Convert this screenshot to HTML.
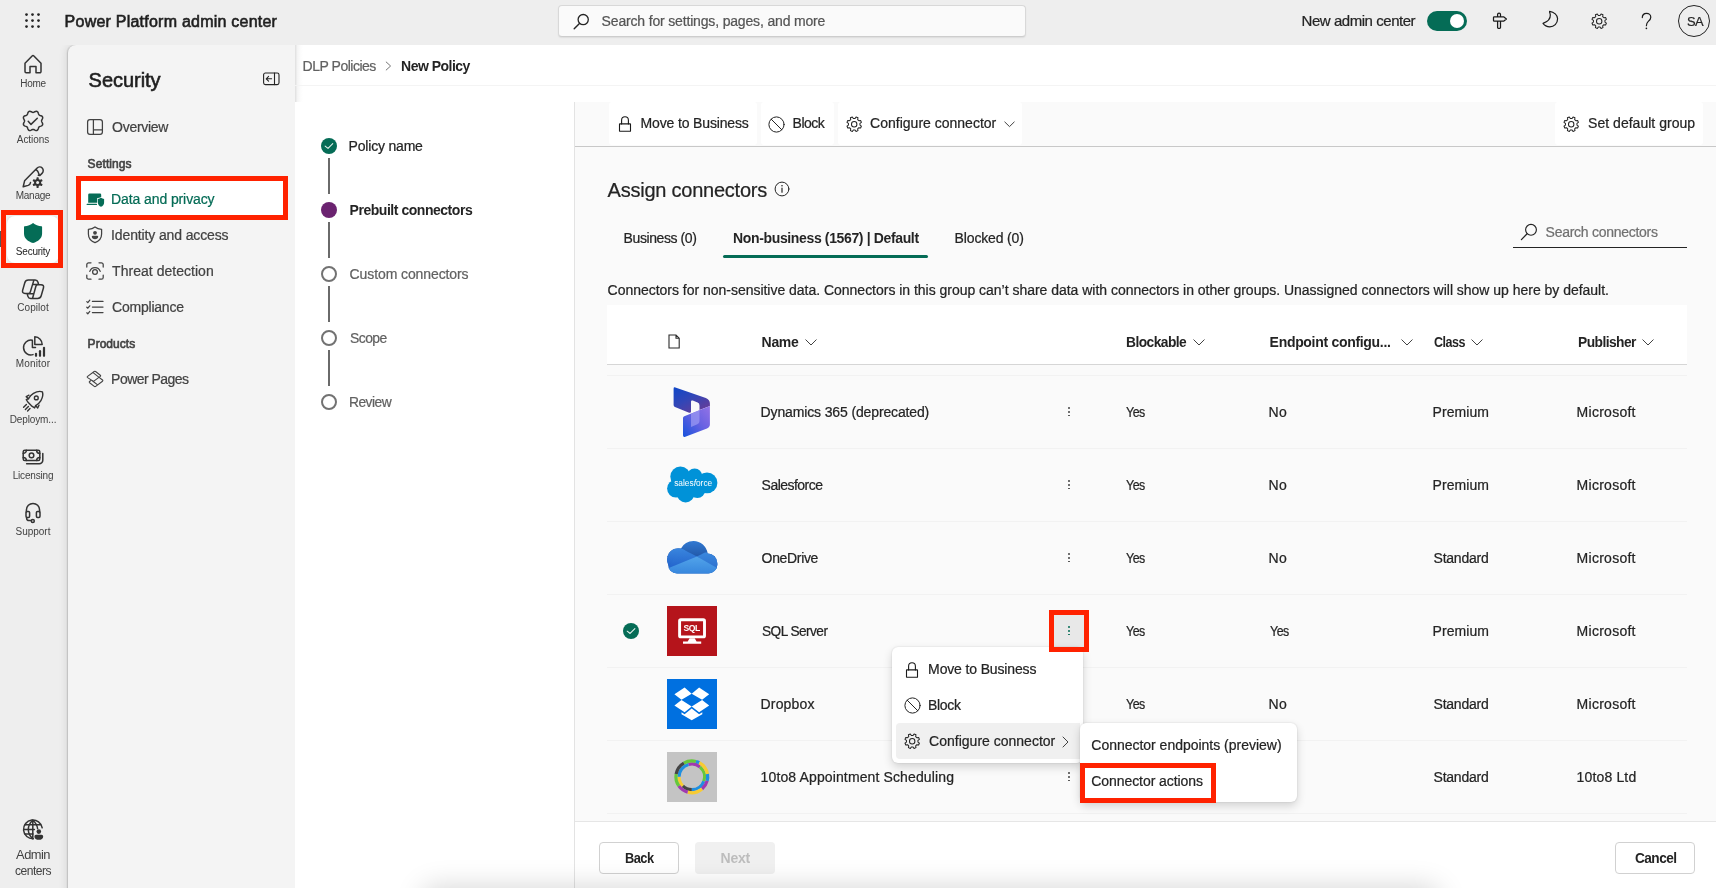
<!DOCTYPE html>
<html><head><meta charset="utf-8">
<style>
*{box-sizing:border-box;margin:0;padding:0}
html,body{width:1716px;height:888px;overflow:hidden}
body{background:#eeeeee;font-family:"Liberation Sans",sans-serif;font-size:14px;color:#242424;position:relative}
.abs{position:absolute}
.t{-webkit-text-stroke:.22px currentColor;position:absolute;white-space:nowrap;line-height:20px;height:20px;transform:translateY(calc(-50% + .3px)) scaleX(var(--sx,1));transform-origin:0 50%}
.sb{-webkit-text-stroke:0.6px currentColor}
svg{position:absolute;overflow:visible}
.ic{fill:none;stroke:#242424;stroke-width:1;stroke-linecap:round;stroke-linejoin:round}
.red{position:absolute;border:4px solid #ff2200}
#root{position:absolute;left:0;top:0;width:1716px;height:888px;will-change:transform}
</style></head><body><div id="root">
<div class="abs" style="left:0;top:0;width:1716px;height:45px;background:#eeeeee"></div>
<svg style="left:24px;top:12px" width="17" height="17" viewBox="0 0 17 17"><g fill="#242424"><circle cx="2.5" cy="2.6" r="1.35"/><circle cx="8.5" cy="2.6" r="1.35"/><circle cx="14.5" cy="2.6" r="1.35"/><circle cx="2.5" cy="8.6" r="1.35"/><circle cx="8.5" cy="8.6" r="1.35"/><circle cx="14.5" cy="8.6" r="1.35"/><circle cx="2.5" cy="14.6" r="1.35"/><circle cx="8.5" cy="14.6" r="1.35"/><circle cx="14.5" cy="14.6" r="1.35"/></g></svg>
<span class="t sb" style="letter-spacing:0.232px;margin-left:-0.40px;left:65px;top:21.900px;font-size:16px;color:#1f1f1f">Power Platform admin center</span>
<div class="abs" style="left:557.500px;top:4.500px;width:468.500px;height:32px;background:#fafafa;border:1px solid #d8d8d8;border-bottom-color:#cdcdcd;border-radius:4px;box-shadow:0 1px 1.500px rgba(0,0,0,.08)"></div>
<svg style="left:573px;top:13px" width="17" height="17" viewBox="0 0 17 17"><circle class="ic" cx="10.2" cy="6.6" r="5.1" style="stroke-width:1.3"/><path class="ic" d="M6.5 10.4 L1.2 15.8" style="stroke-width:1.4"/></svg>
<span class="t" style="letter-spacing:-0.165px;margin-left:0.60px;left:601px;top:21px;font-size:14px;color:#555">Search for settings, pages, and more</span>
<span class="t" style="letter-spacing:-0.459px;margin-left:-0.40px;left:1302px;top:21px;font-size:15px;color:#242424">New admin center</span>
<div class="abs" style="left:1427px;top:11px;width:40px;height:20px;border-radius:10px;background:#056c56"></div>
<div class="abs" style="left:1450px;top:14px;width:14px;height:14px;border-radius:7px;background:#fff"></div>
<!-- signpost -->
<svg style="left:1489px;top:11px" width="20" height="20" viewBox="0 0 20 20"><path class="ic" d="M8.600 5.800 V3.600 a1.450 1.450 0 0 1 2.900 0 V5.800 M5.300 5.800 H14.600 L17.400 8 L14.600 10.200 H5.300 a.8 .8 0 0 1 -.8 -.8 V6.600 a.8 .8 0 0 1 .8 -.8 Z M8.600 10.200 V16.600 a.8 .8 0 0 0 .8 .8 H10.700 a.8 .8 0 0 0 .8 -.8 V10.200" style="stroke-width:1.250;stroke:#1a1a1a"/></svg>
<!-- moon -->
<svg style="left:1540px;top:8px" width="20" height="20" viewBox="0 0 20 20"><path class="ic" d="M9.600 3.300 C14 4 17.600 7 17.600 10.800 C17.600 15.500 14 18.800 9.800 18.800 C7 18.800 4.500 17.500 3 15.400 C7.500 13.800 10.500 10.500 10.300 7 C10.200 5.500 9.400 4.400 9.600 3.300 Z" style="stroke-width:1.200;stroke:#1a1a1a"/></svg>
<!-- gear -->
<svg style="left:1590.700px;top:12.650px" width="16.400" height="16.400" viewBox="0 0 20 20"><g class="mi" style="stroke-width:1.250"><circle cx="10" cy="10" r="3.300"/><path d="M11.05 2.98 L12.28 1.19 L14.62 2.16 L14.22 4.29 L15.71 5.78 L17.84 5.38 L18.81 7.72 L17.02 8.95 L17.02 11.05 L18.81 12.28 L17.84 14.62 L15.71 14.22 L14.22 15.71 L14.62 17.84 L12.28 18.81 L11.05 17.02 L8.95 17.02 L7.72 18.81 L5.38 17.84 L5.78 15.71 L4.29 14.22 L2.16 14.62 L1.19 12.28 L2.98 11.05 L2.98 8.95 L1.19 7.72 L2.16 5.38 L4.29 5.78 L5.78 4.29 L5.38 2.16 L7.72 1.19 L8.95 2.98 Z"/></g></svg>
<svg style="left:1640px;top:11px" width="13" height="20" viewBox="0 0 13 20"><path class="ic" d="M2.300 6.600 C2.300 4.200 4 2.400 6.500 2.400 C9 2.400 10.800 4.100 10.800 6.300 C10.800 8.300 9.600 9.300 8.300 10.400 C7.100 11.500 6.400 12.300 6.400 14.700" style="stroke-width:1.200;stroke:#1a1a1a"/><circle cx="6.400" cy="17.300" r=".85" fill="#1a1a1a"/></svg>
<div class="abs" style="left:1678px;top:5px;width:32px;height:32px;border-radius:16px;border:1px solid #242424"></div>
<span class="t" style="letter-spacing:-0.550px;margin-left:0.60px;--sx:0.9929;left:1686px;top:22px;font-size:13px;color:#242424">SA</span>

<style>
.rl{position:absolute;white-space:nowrap;font-size:10px;line-height:14px;height:14px;color:#424242;transform:translate(-50%,-50%) scaleX(var(--sx,1));left:33px}
.ri{fill:none;stroke:#333;stroke-width:1.5;stroke-linecap:round;stroke-linejoin:round}
</style>
<!-- selected bg -->
<div class="abs" style="left:6.500px;top:215.700px;width:52px;height:47.500px;border-radius:8px;background:#fff;box-shadow:0 0 2px rgba(0,0,0,.10)"></div>
<div class="abs" style="left:0;top:231px;width:1.500px;height:16px;background:#555"></div>
<!-- home -->
<svg style="left:23px;top:54px" width="20" height="20" viewBox="0 0 20 20"><path class="ri" d="M2 9.2 V17.6 a1.2 1.2 0 0 0 1.2 1.2 H7 V12.6 H13 V18.8 H16.8 a1.2 1.2 0 0 0 1.2 -1.2 V9.2 L10.9 2 a1.3 1.3 0 0 0 -1.8 0 Z"/></svg>
<span class="rl" style="letter-spacing:-0.271px;margin-left:0.00px;top:84px">Home</span>
<!-- actions -->
<svg style="left:22px;top:110px" width="22" height="22" viewBox="0 0 22 22"><path class="ri" d="M11.05 2.40 L11.61 2.30 L12.22 2.03 L12.88 1.68 L13.60 1.39 L14.32 1.26 L14.99 1.38 L15.55 1.77 L15.98 2.37 L16.27 3.08 L16.50 3.80 L16.73 4.42 L17.06 4.89 L17.53 5.22 L18.15 5.45 L18.87 5.68 L19.58 5.97 L20.18 6.40 L20.57 6.96 L20.69 7.63 L20.56 8.35 L20.27 9.07 L19.92 9.73 L19.65 10.34 L19.55 10.90 L19.65 11.46 L19.92 12.07 L20.27 12.73 L20.56 13.45 L20.69 14.17 L20.57 14.84 L20.18 15.40 L19.58 15.82 L18.87 16.12 L18.15 16.35 L17.53 16.58 L17.06 16.91 L16.73 17.38 L16.50 18.00 L16.27 18.72 L15.98 19.43 L15.55 20.03 L14.99 20.42 L14.32 20.54 L13.60 20.41 L12.88 20.12 L12.22 19.77 L11.61 19.50 L11.05 19.40 L10.49 19.50 L9.88 19.77 L9.22 20.12 L8.50 20.41 L7.78 20.54 L7.11 20.42 L6.55 20.03 L6.13 19.43 L5.83 18.72 L5.60 18.00 L5.37 17.38 L5.04 16.91 L4.57 16.58 L3.95 16.35 L3.23 16.12 L2.52 15.83 L1.92 15.40 L1.53 14.84 L1.41 14.17 L1.54 13.45 L1.83 12.73 L2.18 12.07 L2.45 11.46 L2.55 10.90 L2.45 10.34 L2.18 9.73 L1.83 9.07 L1.54 8.35 L1.41 7.63 L1.53 6.96 L1.92 6.40 L2.52 5.97 L3.23 5.68 L3.95 5.45 L4.57 5.22 L5.04 4.89 L5.37 4.42 L5.60 3.80 L5.83 3.08 L6.12 2.37 L6.55 1.77 L7.11 1.38 L7.78 1.26 L8.50 1.39 L9.22 1.68 L9.88 2.03 L10.49 2.30 Z M6.200 11.300 L9 14.400 L15.300 8.200"/></svg>
<span class="rl" style="letter-spacing:-0.049px;margin-left:0.00px;top:140px">Actions</span>
<!-- manage -->
<svg style="left:22px;top:166px" width="23" height="23" viewBox="0 0 23 23"><path class="ri" d="M1.200 20.700 L2.600 14.800 L14.900 2.300 C16.400 .8 18.800 .6 20.200 2 C21.700 3.500 21.500 5.900 20 7.400 L17.900 9.500 L16.300 9.300 M14 3.300 C15.500 4.500 16.800 6.300 17.300 8.800 M1.200 20.700 L6.100 19.400 C7.300 19 8.300 17.900 8.500 16.600"/><g fill="#333"><circle cx="15.600" cy="16.600" r="3.500"/><rect x="14.500" y="11.300" width="2.200" height="10.600" rx=".6"/><rect x="14.500" y="11.300" width="2.200" height="10.600" rx=".6" transform="rotate(60 15.600 16.600)"/><rect x="14.500" y="11.300" width="2.200" height="10.600" rx=".6" transform="rotate(120 15.600 16.600)"/></g><circle cx="15.600" cy="16.600" r="1.500" fill="#eee"/></svg>
<span class="rl" style="letter-spacing:-0.295px;margin-left:0.00px;top:196px">Manage</span>
<!-- security -->
<svg style="left:23.900px;top:223px" width="18.100" height="20.100" viewBox="0 0 18.100 20.100"><path d="M9.050 0 C7 2 3.500 3.200 .6 3.300 Q0 3.300 0 3.900 V10.500 C0 15.500 4 18.500 9.050 20.100 C14.100 18.500 18.100 15.500 18.100 10.500 V3.900 Q18.100 3.300 17.500 3.300 C14.600 3.200 11.100 2 9.050 0 Z" fill="#046c56"/></svg>
<span class="rl" style="letter-spacing:-0.232px;margin-left:0.00px;top:252px;color:#242424">Security</span>
<!-- copilot -->
<svg style="left:21px;top:279px" width="24" height="21" viewBox="0 0 24 21"><path class="ri" d="M7.400 1.100 H12.900 L9.300 13 Q8.900 14.400 7.400 14.400 H4 Q1 14.400 1.600 11.400 L3.800 3.800 Q4.600 1.100 7.400 1.100 Z M16.800 5.800 H20 Q23.200 5.800 22.500 8.800 L20.200 16.800 Q19.400 19.500 16.600 19.500 H11.500 L14.900 7.200 Q15.300 5.800 16.800 5.800 M12.900 1.100 H14.200 Q16.400 1.100 17 3.200 L17.700 5.600 M11.700 5.600 H16.800 M6.100 14.600 L6.900 17.400 Q7.500 19.500 9.700 19.500 H11.500 M7.600 14.700 H12.400"/></svg>
<span class="rl" style="letter-spacing:0.058px;margin-left:0.00px;top:308px">Copilot</span>
<!-- monitor -->
<svg style="left:24px;top:335px" width="22" height="23" viewBox="0 0 22 23"><g class="ri"><path d="M8.200 5.200 A7.400 7.400 0 1 0 9 19.600"/><path d="M10.800 1.800 V9.600 H18.200 A7.600 7.600 0 0 0 10.800 1.800 Z"/><path d="M8.400 5.400 V12.400 H11.500"/></g><g stroke="#333" stroke-width="2.200" stroke-linecap="round"><path d="M12 20.800 V18.800"/><path d="M16 20.800 V16.200"/><path d="M20 20.800 V12.800"/></g></svg>
<span class="rl" style="letter-spacing:0.181px;margin-left:0.00px;top:364px">Monitor</span>
<!-- deployment -->
<svg style="left:22px;top:390px" width="22" height="22" viewBox="0 0 22 22"><g class="ri" style="stroke-width:1.400"><path d="M11.500 3.300 C14.500 1.600 18.500 1.200 20.400 1.800 C21 3.700 20.600 7.700 18.900 10.700 C17.600 13 15.500 14.600 13.700 15.600 L12.600 17.900 L10.200 16.400 L5.800 12 L4.300 9.600 L6.600 8.500 C7.600 6.700 9.200 4.600 11.500 3.300 Z"/><circle cx="14.300" cy="7.900" r="1.900"/><path d="M6.600 8.700 L4.200 6.600 L7 5.200 M13.600 15.600 L15.700 18 L17 15.200"/><path d="M1.600 17.200 L4.400 14.400 M3.400 19.400 L6.400 16.400 M5.600 21 L8 18.600"/></g></svg>
<span class="rl" style="letter-spacing:-0.113px;margin-left:0.00px;top:420px">Deploym...</span>
<!-- licensing -->
<svg style="left:22px;top:449px" width="23" height="18" viewBox="0 0 23 18"><g class="ri"><rect x="1.200" y="1.200" width="16.600" height="10.400" rx="1.600"/><circle cx="9.500" cy="6.400" r="2.300"/><path d="M1.200 4.400 a3.200 3.200 0 0 0 3.200 -3.200 M17.800 4.400 a3.200 3.200 0 0 1 -3.200 -3.200 M1.200 8.400 a3.200 3.200 0 0 1 3.200 3.200 M17.800 8.400 a3.200 3.200 0 0 0 -3.200 3.200"/><path d="M20.800 4.600 V11.200 a3.600 3.600 0 0 1 -3.600 3.600 H4.600"/></g></svg>
<span class="rl" style="letter-spacing:-0.186px;margin-left:0.00px;top:476px">Licensing</span>
<!-- support -->
<svg style="left:24px;top:502px" width="18" height="22" viewBox="0 0 18 22"><g class="ri"><path d="M2.400 10 V8 a6.600 6.600 0 0 1 13.200 0 V10"/><rect x="2" y="9.400" width="3.600" height="6" rx="1.200"/><rect x="12.400" y="9.400" width="3.600" height="6" rx="1.200"/><path d="M2.600 15.400 V16 a2.600 2.600 0 0 0 2.600 2.600 H7.400"/><circle cx="8.800" cy="18.900" r="1.500"/></g></svg>
<span class="rl" style="letter-spacing:-0.024px;margin-left:0.00px;top:532px">Support</span>
<!-- admin centers -->
<svg style="left:22px;top:819px" width="23" height="23" viewBox="0 0 23 23"><g class="ri"><path d="M11.400 19.800 A9.400 9.400 0 1 1 20.200 8.800"/><path d="M1.800 10.400 H12.400 M3 5.800 H18.400 M3 15 H11"/><path d="M10.800 1.200 C4.800 6.400 4.800 14.600 10.800 19.600 M10.800 1.200 C13.800 3.800 15.200 6.400 15.600 9.600 M10.800 1.200 V19.600"/></g><circle cx="16.800" cy="12.600" r="2.300" fill="#333"/><path d="M12.400 17.400 a1.600 1.600 0 0 1 1.600 -1.600 H19.600 a1.600 1.600 0 0 1 1.600 1.600 c0 2.200 -1.900 3.400 -4.400 3.400 s-4.400 -1.200 -4.400 -3.400 z" fill="#333"/></svg>
<span class="rl" style="letter-spacing:-0.550px;margin-left:0.00px;--sx:0.9908;top:855px;font-size:13px;line-height:16px;height:16px">Admin</span>
<span class="rl" style="letter-spacing:-0.550px;margin-left:0.00px;--sx:0.9289;top:871px;font-size:13px;line-height:16px;height:16px">centers</span>
<div class="red" style="left:1.200px;top:210.400px;width:62.100px;height:58px;border-width:5.300px"></div>

<style>
.ni{fill:none;stroke:#424242;stroke-width:1.250;stroke-linecap:round;stroke-linejoin:round}
.nt{color:#424242;font-size:14px;left:111.500px}
.nh{color:#424242;font-size:12px;left:87px}
</style>
<div class="abs" style="left:50px;top:45px;width:245px;height:843px;overflow:hidden"><div class="abs" style="left:18px;top:0;width:240px;height:860px;background:#f4f4f4;border-radius:8px 0 0 0;box-shadow:-.5px 0 1.500px rgba(0,0,0,.17), -3px 0 7px rgba(0,0,0,.07)"></div></div>
<span class="t sb" style="letter-spacing:-0.035px;margin-left:0.60px;left:88px;top:79.500px;font-size:20px;line-height:28px;height:28px;color:#1f1f1f">Security</span>
<!-- collapse icon -->
<svg style="left:263px;top:72px" width="17" height="14" viewBox="0 0 17 14"><rect class="ni" x=".6" y="1" width="15.400" height="11.600" rx="1.800" style="stroke:#242424;stroke-width:1.100"/><path class="ni" d="M11.500 1 V12.600 M8.600 6.800 H3.400 M5.600 4.400 L3.200 6.800 L5.600 9.200" style="stroke:#242424;stroke-width:1.100"/></svg>
<!-- overview -->
<svg style="left:87px;top:119px" width="16" height="16" viewBox="0 0 16 16"><rect class="ni" x=".6" y=".6" width="14.800" height="14.800" rx="2.400"/><path class="ni" d="M6.400 .6 V15.400 M6.400 10.800 H15.400"/></svg>
<span class="t nt" style="letter-spacing:-0.291px;margin-left:0.60px;top:127px">Overview</span>
<span class="t nh sb" style="letter-spacing:0.092px;margin-left:0.60px;top:163.500px">Settings</span>
<!-- selected -->
<div class="abs" style="left:80px;top:181px;width:206px;height:36px;border-radius:4px;background:#fff"></div>
<svg style="left:86px;top:193px" width="19" height="15" viewBox="0 0 19 15"><g fill="#056c56"><path d="M2.200 1.800 a1.200 1.200 0 0 1 1.200 -1.200 H14 a1.200 1.200 0 0 1 1.200 1.200 V4 c-1.400 .8 -2.800 1 -4 1.100 V9.800 H2.200 Z"/><rect x=".6" y="10.800" width="10.400" height="1.100" rx=".5"/><path d="M15 4.800 c1 .8 2 1.100 3.100 1.200 V9.400 c0 2.300 -1.400 3.600 -3.100 4.300 c-1.700 -.7 -3.100 -2 -3.100 -4.300 V6 c1.100 -.1 2.100 -.4 3.100 -1.200 z"/></g></svg>
<span class="t nt" style="letter-spacing:-0.104px;margin-left:-0.40px;top:199px;color:#056c56">Data and privacy</span>
<!-- identity -->
<svg style="left:87px;top:226px" width="16" height="18" viewBox="0 0 16 18"><path class="ni" d="M8 1 C6 2.600 3.800 3.200 1.400 3.300 V8 C1.400 12.400 4.200 15.200 8 16.600 C11.800 15.200 14.600 12.400 14.600 8 V3.300 C12.200 3.200 10 2.600 8 1 Z"/><circle cx="8" cy="6.800" r="1.900" fill="#424242"/><path d="M4.800 10.800 a1 1 0 0 1 1 -1 H10.200 a1 1 0 0 1 1 1 c0 1.500 -1.400 2.400 -3.200 2.400 s-3.200 -.9 -3.200 -2.400 z" fill="#424242"/></svg>
<span class="t nt" style="letter-spacing:-0.130px;margin-left:-0.40px;top:235px">Identity and access</span>
<!-- threat -->
<svg style="left:86px;top:262px" width="18" height="18" viewBox="0 0 18 18"><path class="ni" d="M.8 5 V2.600 A1.800 1.800 0 0 1 2.600 .8 H5 M13 .8 H15.400 A1.800 1.800 0 0 1 17.200 2.600 V5 M17.200 13 V15.400 A1.800 1.800 0 0 1 15.400 17.200 H13 M5 17.200 H2.600 A1.800 1.800 0 0 1 .8 15.400 V13"/><circle class="ni" cx="9" cy="10" r="2.400"/><path class="ni" d="M3.800 9.400 C4.600 6.800 6.600 5.600 9 5.600 C11.400 5.600 13.400 6.800 14.200 9.400"/></svg>
<span class="t nt" style="letter-spacing:0.028px;margin-left:0.60px;top:271px">Threat detection</span>
<!-- compliance -->
<svg style="left:86px;top:299px" width="18" height="16" viewBox="0 0 18 16"><path class="ni" d="M6.400 2.400 H17 M6.400 8 H17 M6.400 13.600 H17 M.8 2.600 L1.800 3.600 L3.800 1.200 M.8 8.200 L1.800 9.200 L3.800 6.800 M.8 13.800 L1.800 14.800 L3.800 12.400"/></svg>
<span class="t nt" style="letter-spacing:-0.226px;margin-left:0.60px;top:307px">Compliance</span>
<span class="t nh sb" style="letter-spacing:0.035px;margin-left:0.60px;top:343.500px">Products</span>
<!-- power pages -->
<svg style="left:86px;top:370px" width="18" height="18" viewBox="0 0 18 18"><path class="ni" style="stroke-width:1.100" d="M1.600 7.600 Q.8 7 1.600 6.400 L8.200 1.500 Q8.900 1 9.600 1.500 L14.300 5.200 Q15 5.800 14.300 6.400 L7.500 11.400 Z M7.400 2.900 L13.100 7.400 M13.100 7.400 L16.500 10 Q17.200 10.600 16.500 11.200 L9.700 16.400 Q9 16.900 8.300 16.400 L3.600 12.700 Q2.900 12.100 3.600 11.500 L4.800 10.500 M6.300 10.700 L11.300 14.600"/></svg>
<span class="t nt" style="letter-spacing:-0.547px;margin-left:-0.40px;top:379px">Power Pages</span>
<div class="red" style="left:76.100px;top:176.400px;width:212.300px;height:43.200px;border-width:5px"></div>

<style>
.mi{fill:none;stroke:#242424;stroke-width:1;stroke-linecap:round;stroke-linejoin:round}
.cell{font-size:14px;color:#242424}
.th{font-size:14px;color:#242424;font-weight:bold;-webkit-text-stroke:0}
.sep{position:absolute;left:607px;width:1080px;height:1px;background:#f2f2f2}
.dots{position:absolute;left:1068px;width:2px}
.dots i{position:absolute;left:0;width:1.500px;height:1.500px;border-radius:1px;background:#4a4a4a}
</style>
<!-- white content -->
<div class="abs" style="left:295px;top:45px;width:1421px;height:843px;background:#fff"></div>
<div class="abs" style="left:295px;top:45px;width:8px;height:57px;background:linear-gradient(90deg,rgba(0,0,0,.13),rgba(0,0,0,.045) 30%,rgba(0,0,0,.01) 70%,rgba(0,0,0,0))"></div>
<div class="abs" style="left:295px;top:85px;width:1421px;height:1px;background:#f4f4f4"></div>
<!-- breadcrumb -->
<span class="t" style="letter-spacing:-0.488px;margin-left:-0.40px;left:303px;top:66px;color:#616161">DLP Policies</span>
<svg style="left:385px;top:61px" width="7" height="10" viewBox="0 0 7 10"><path class="mi" d="M1.200 1 L5.600 5 L1.200 9" style="stroke:#757575"/></svg>
<span class="t" style="letter-spacing:-0.515px;margin-left:0.60px;left:400.500px;top:66px;font-weight:bold;-webkit-text-stroke:0;color:#242424">New Policy</span>
<!-- steps -->
<div class="abs" style="left:328px;top:158px;width:1.600px;height:36px;background:#6a6a6a"></div>
<div class="abs" style="left:328px;top:222px;width:1.600px;height:36px;background:#6a6a6a"></div>
<div class="abs" style="left:328px;top:286px;width:1.600px;height:36px;background:#6a6a6a"></div>
<div class="abs" style="left:328px;top:350px;width:1.600px;height:36px;background:#6a6a6a"></div>
<div class="abs" style="left:320.800px;top:138px;width:16px;height:16px;border-radius:8px;background:#056c56"></div>
<svg style="left:320.800px;top:138px" width="16" height="16" viewBox="0 0 16.200 16.200"><path d="M4.200 8.200 L7.100 10.500 L11.900 5.600" fill="none" stroke="#e8f3ef" stroke-width="1.050" stroke-linecap="round" stroke-linejoin="round"/></svg>
<div class="abs" style="left:320.800px;top:202px;width:16px;height:16px;border-radius:8px;background:#6b2370"></div>
<div class="abs" style="left:320.800px;top:266px;width:16px;height:16px;border-radius:8px;border:2px solid #727272;background:#fff"></div>
<div class="abs" style="left:320.800px;top:330px;width:16px;height:16px;border-radius:8px;border:2px solid #727272;background:#fff"></div>
<div class="abs" style="left:320.800px;top:394px;width:16px;height:16px;border-radius:8px;border:2px solid #727272;background:#fff"></div>
<span class="t" style="letter-spacing:-0.197px;margin-left:-0.40px;left:349px;top:146px;color:#242424">Policy name</span>
<span class="t" style="letter-spacing:-0.466px;margin-left:0.60px;left:349px;top:210px;color:#242424;font-weight:bold;-webkit-text-stroke:0">Prebuilt connectors</span>
<span class="t" style="letter-spacing:-0.100px;margin-left:0.60px;left:349px;top:274px;color:#616161">Custom connectors</span>
<span class="t" style="letter-spacing:-0.550px;margin-left:0.60px;--sx:0.9944;left:349px;top:338px;color:#616161">Scope</span>
<span class="t" style="letter-spacing:-0.550px;margin-left:-0.39px;--sx:0.9874;left:349px;top:402px;color:#616161">Review</span>
<!-- right panel -->
<div class="abs" style="left:574px;top:102px;width:1142px;height:720px;background:#fafafa;border-left:1px solid #e3e3e3"></div>
<div class="abs" style="left:575px;top:146px;width:1141px;height:1px;background:#c8c8c8"></div>
<!-- toolbar buttons -->
<div class="abs" style="left:609px;top:102px;width:148px;height:43.300px;background:#fff;border-radius:3px"></div>
<div class="abs" style="left:761px;top:102px;width:73px;height:43.300px;background:#fff;border-radius:3px"></div>
<div class="abs" style="left:838px;top:102px;width:184px;height:43.300px;background:#fff;border-radius:3px"></div>
<div class="abs" style="left:1555px;top:102px;width:148px;height:43.300px;background:#fff;border-radius:3px"></div>
<svg id="lock1" style="left:618px;top:115px" width="14" height="18" viewBox="0 0 14 18"><rect class="mi" x="1.500" y="8.900" width="11" height="7.400" rx=".3" style="stroke-width:1.100;stroke:#1a1a1a"/><path class="mi" d="M3.600 8.900 V5.200 a3.400 3.400 0 0 1 6.800 0 V8.900" style="stroke-width:1.100;stroke:#1a1a1a"/></svg>
<span class="t" style="letter-spacing:-0.153px;margin-left:-0.40px;left:641px;top:123px">Move to Business</span>
<svg style="left:768px;top:115.500px" width="17" height="17" viewBox="0 0 17 17"><circle class="mi" cx="8.500" cy="8.500" r="7.600"/><path class="mi" d="M3.200 3.200 L13.800 13.800"/></svg>
<span class="t" style="letter-spacing:-0.509px;margin-left:-0.40px;left:793px;top:123px">Block</span>
<svg class="gear" style="left:845.650px;top:115.650px" width="16.400" height="16.400" viewBox="0 0 20 20"><g class="mi" style="stroke-width:1.250"><circle cx="10" cy="10" r="3.300"/><path d="M11.05 2.98 L12.28 1.19 L14.62 2.16 L14.22 4.29 L15.71 5.78 L17.84 5.38 L18.81 7.72 L17.02 8.95 L17.02 11.05 L18.81 12.28 L17.84 14.62 L15.71 14.22 L14.22 15.71 L14.62 17.84 L12.28 18.81 L11.05 17.02 L8.95 17.02 L7.72 18.81 L5.38 17.84 L5.78 15.71 L4.29 14.22 L2.16 14.62 L1.19 12.28 L2.98 11.05 L2.98 8.95 L1.19 7.72 L2.16 5.38 L4.29 5.78 L5.78 4.29 L5.38 2.16 L7.72 1.19 L8.95 2.98 Z"/></g></svg>
<span class="t" style="letter-spacing:0.005px;margin-left:0.60px;left:869.500px;top:123px">Configure connector</span>
<svg style="left:1004px;top:120.500px" width="11" height="7" viewBox="0 0 11 7"><path class="mi" d="M.8 1 L5.500 5.600 L10.200 1" style="stroke:#424242"/></svg>
<svg class="gear" style="left:1563.250px;top:115.800px" width="16.400" height="16.400" viewBox="0 0 20 20"><g class="mi" style="stroke-width:1.250"><circle cx="10" cy="10" r="3.300"/><path d="M11.05 2.98 L12.28 1.19 L14.62 2.16 L14.22 4.29 L15.71 5.78 L17.84 5.38 L18.81 7.72 L17.02 8.95 L17.02 11.05 L18.81 12.28 L17.84 14.62 L15.71 14.22 L14.22 15.71 L14.62 17.84 L12.28 18.81 L11.05 17.02 L8.95 17.02 L7.72 18.81 L5.38 17.84 L5.78 15.71 L4.29 14.22 L2.16 14.62 L1.19 12.28 L2.98 11.05 L2.98 8.95 L1.19 7.72 L2.16 5.38 L4.29 5.78 L5.78 4.29 L5.38 2.16 L7.72 1.19 L8.95 2.98 Z"/></g></svg>
<span class="t" style="letter-spacing:0.022px;margin-left:0.60px;left:1587.500px;top:123px">Set default group</span>
<!-- heading -->
<span class="t" style="letter-spacing:-0.239px;margin-left:0.60px;left:607px;top:190px;font-size:20px;line-height:28px;height:28px">Assign connectors</span>
<svg style="left:773.600px;top:181.200px" width="16" height="16" viewBox="0 0 16 16"><circle class="mi" cx="8" cy="8" r="6.900"/><path class="mi" d="M8 7 V11.200" style="stroke-width:1.200"/><circle cx="8" cy="4.800" r=".8" fill="#242424"/></svg>
<!-- tabs -->
<span class="t" style="letter-spacing:-0.413px;margin-left:-0.40px;left:624px;top:238px">Business (0)</span>
<span class="t" style="letter-spacing:-0.361px;margin-left:0.60px;left:732.500px;top:238px;font-weight:bold;-webkit-text-stroke:0">Non-business (1567) | Default</span>
<div class="abs" style="left:723px;top:254.700px;width:205px;height:3.300px;border-radius:2px;background:#056c56"></div>
<span class="t" style="letter-spacing:-0.154px;margin-left:-0.40px;left:955px;top:238px">Blocked (0)</span>
<!-- search connectors -->
<svg style="left:1520px;top:223px" width="18" height="18" viewBox="0 0 18 18"><circle class="mi" cx="11" cy="6.800" r="5.400" style="stroke:#242424;stroke-width:1.150"/><path class="mi" d="M7.100 10.800 L1.400 16.600" style="stroke:#242424;stroke-width:1.300"/></svg>
<span class="t" style="letter-spacing:-0.277px;margin-left:0.60px;left:1545px;top:232px;color:#707070">Search connectors</span>
<div class="abs" style="left:1513px;top:246.700px;width:174px;height:1.200px;background:#242424"></div>
<!-- description -->
<span class="t" style="letter-spacing:-0.021px;margin-left:0.60px;left:607px;top:290px">Connectors for non-sensitive data. Connectors in this group can’t share data with connectors in other groups. Unassigned connectors will show up here by default.</span>
<!-- table header -->
<div class="abs" style="left:607px;top:305px;width:1080px;height:59px;background:#fff"></div>
<div class="abs" style="left:607px;top:363.800px;width:1080px;height:1.200px;background:#d6d6d6"></div>
<svg style="left:667.500px;top:334px" width="13" height="15" viewBox="0 0 13 15"><path class="mi" d="M1 1 H8 L11.200 4.200 V14 H1 Z M8 1 V4.200 H11.200" style="stroke:#2b2b2b;stroke-linejoin:miter;stroke-width:1.100"/></svg>
<span class="t th" style="letter-spacing:-0.315px;margin-left:0.60px;left:761px;top:342px">Name</span>
<svg style="left:805px;top:338.500px" width="12" height="7" viewBox="0 0 12 7"><path class="mi" d="M.8 .8 L6 6 L11.200 .8" style="stroke:#424242"/></svg>
<span class="t th" style="letter-spacing:-0.550px;margin-left:0.60px;--sx:0.9846;left:1125px;top:342px">Blockable</span>
<svg style="left:1193px;top:338.500px" width="12" height="7" viewBox="0 0 12 7"><path class="mi" d="M.8 .8 L6 6 L11.200 .8" style="stroke:#424242"/></svg>
<span class="t th" style="letter-spacing:-0.303px;margin-left:0.60px;left:1269px;top:342px">Endpoint configu...</span>
<svg style="left:1401px;top:338.500px" width="12" height="7" viewBox="0 0 12 7"><path class="mi" d="M.8 .8 L6 6 L11.200 .8" style="stroke:#424242"/></svg>
<span class="t th" style="letter-spacing:-0.550px;margin-left:0.60px;--sx:0.8934;left:1433px;top:342px">Class</span>
<svg style="left:1471px;top:338.500px" width="12" height="7" viewBox="0 0 12 7"><path class="mi" d="M.8 .8 L6 6 L11.200 .8" style="stroke:#424242"/></svg>
<span class="t th" style="letter-spacing:-0.550px;margin-left:0.60px;--sx:0.9842;left:1577px;top:342px">Publisher</span>
<svg style="left:1642px;top:338.500px" width="12" height="7" viewBox="0 0 12 7"><path class="mi" d="M.8 .8 L6 6 L11.200 .8" style="stroke:#424242"/></svg>
<!-- separators -->
<div class="sep" style="top:375px"></div><div class="sep" style="top:448px"></div><div class="sep" style="top:521px"></div><div class="sep" style="top:594px"></div><div class="sep" style="top:667px"></div><div class="sep" style="top:740px"></div><div class="sep" style="top:813px"></div>
<span class="t cell" style="letter-spacing:-0.138px;margin-left:-0.40px;left:761px;top:412px">Dynamics 365 (deprecated)</span>
<span class="t cell" style="letter-spacing:-0.550px;margin-left:0.60px;--sx:0.8832;left:1125px;top:412px">Yes</span>
<span class="t cell" style="letter-spacing:0.390px;margin-left:-0.40px;left:1269px;top:412px">No</span>
<span class="t cell" style="letter-spacing:0.059px;margin-left:-0.40px;left:1433px;top:412px">Premium</span>
<span class="t cell" style="letter-spacing:0.263px;margin-left:-0.40px;left:1577px;top:412px">Microsoft</span>
<div class="dots" style="top:407.4px"><i style="top:0;background:#424242"></i><i style="top:3.800px;background:#424242"></i><i style="top:7.600px;background:#424242"></i></div>
<span class="t cell" style="letter-spacing:-0.529px;margin-left:0.60px;left:761px;top:485px">Salesforce</span>
<span class="t cell" style="letter-spacing:-0.550px;margin-left:0.60px;--sx:0.8832;left:1125px;top:485px">Yes</span>
<span class="t cell" style="letter-spacing:0.390px;margin-left:-0.40px;left:1269px;top:485px">No</span>
<span class="t cell" style="letter-spacing:0.059px;margin-left:-0.40px;left:1433px;top:485px">Premium</span>
<span class="t cell" style="letter-spacing:0.263px;margin-left:-0.40px;left:1577px;top:485px">Microsoft</span>
<div class="dots" style="top:480.4px"><i style="top:0;background:#424242"></i><i style="top:3.800px;background:#424242"></i><i style="top:7.600px;background:#424242"></i></div>
<span class="t cell" style="letter-spacing:-0.335px;margin-left:0.60px;left:761px;top:558px">OneDrive</span>
<span class="t cell" style="letter-spacing:-0.550px;margin-left:0.60px;--sx:0.8832;left:1125px;top:558px">Yes</span>
<span class="t cell" style="letter-spacing:0.390px;margin-left:-0.40px;left:1269px;top:558px">No</span>
<span class="t cell" style="letter-spacing:-0.248px;margin-left:0.60px;left:1433px;top:558px">Standard</span>
<span class="t cell" style="letter-spacing:0.263px;margin-left:-0.40px;left:1577px;top:558px">Microsoft</span>
<div class="dots" style="top:553.4px"><i style="top:0;background:#424242"></i><i style="top:3.800px;background:#424242"></i><i style="top:7.600px;background:#424242"></i></div>
<span class="t cell" style="letter-spacing:-0.550px;margin-left:0.60px;--sx:0.9748;left:761px;top:631px">SQL Server</span>
<span class="t cell" style="letter-spacing:-0.550px;margin-left:0.60px;--sx:0.8832;left:1125px;top:631px">Yes</span>
<span class="t cell" style="letter-spacing:-0.550px;margin-left:0.60px;--sx:0.8832;left:1269px;top:631px">Yes</span>
<span class="t cell" style="letter-spacing:0.059px;margin-left:-0.40px;left:1433px;top:631px">Premium</span>
<span class="t cell" style="letter-spacing:0.263px;margin-left:-0.40px;left:1577px;top:631px">Microsoft</span>
<div class="abs" style="left:1053px;top:614px;width:32px;height:34px;background:#e8e8e8;border-radius:3px"></div>
<div class="dots" style="top:626.4px"><i style="top:0;background:#056c56"></i><i style="top:3.800px;background:#056c56"></i><i style="top:7.600px;background:#056c56"></i></div>
<span class="t cell" style="letter-spacing:0.147px;margin-left:-0.40px;left:761px;top:704px">Dropbox</span>
<span class="t cell" style="letter-spacing:-0.550px;margin-left:0.60px;--sx:0.8832;left:1125px;top:704px">Yes</span>
<span class="t cell" style="letter-spacing:0.390px;margin-left:-0.40px;left:1269px;top:704px">No</span>
<span class="t cell" style="letter-spacing:-0.248px;margin-left:0.60px;left:1433px;top:704px">Standard</span>
<span class="t cell" style="letter-spacing:0.263px;margin-left:-0.40px;left:1577px;top:704px">Microsoft</span>
<div class="dots" style="top:699.4px"><i style="top:0;background:#424242"></i><i style="top:3.800px;background:#424242"></i><i style="top:7.600px;background:#424242"></i></div>
<span class="t cell" style="letter-spacing:0.126px;margin-left:-0.40px;left:761px;top:777px">10to8 Appointment Scheduling</span>
<span class="t cell" style="letter-spacing:-0.248px;margin-left:0.60px;left:1433px;top:777px">Standard</span>
<span class="t cell" style="letter-spacing:0.150px;margin-left:-0.40px;left:1577px;top:777px">10to8 Ltd</span>
<div class="dots" style="top:772.4px"><i style="top:0;background:#424242"></i><i style="top:3.800px;background:#424242"></i><i style="top:7.600px;background:#424242"></i></div>
<svg style="left:672.900px;top:386.800px" width="38" height="51" viewBox="0 0 38 51"><defs>
<linearGradient id="dg1" x1="0" y1="0" x2=".75" y2="1"><stop offset="0" stop-color="#0f47c8"/><stop offset=".5" stop-color="#3346b6"/><stop offset="1" stop-color="#673c98"/></linearGradient>
<linearGradient id="dg2" x1="1" y1="0" x2="0" y2="1"><stop offset="0" stop-color="#9473e6"/><stop offset=".45" stop-color="#6a62e2"/><stop offset="1" stop-color="#1753dc"/></linearGradient></defs>
<path d="M.6 1.800 Q.6 -.2 2.400 .5 L32.800 11 Q36.900 12.600 36.900 16.600 V18.900 L26.500 23 V18.400 Q26.500 16.300 24.600 15.500 L19.800 13.600 Q18 12.900 18 14.800 V24.400 Q18 26.300 16.100 25.700 L2 20.100 Q.6 19.500 .6 18 Z" fill="url(#dg1)"/>
<path d="M10 31 Q10 29.700 11.300 29.200 L36.900 18.900 V37.600 Q36.900 40.400 34 41.400 L12.300 49.800 Q10 50.600 10 48.200 Z" fill="url(#dg2)"/>
<path d="M18 26.700 L26.500 23.300 V34 Q26.500 36.200 24.400 37.200 L18 39.900 Z" fill="#9a98f2" fill-opacity=".75"/>
</svg>
<svg style="left:666.800px;top:467px" width="51" height="36" viewBox="0 0 51 36"><g fill="#0092d8">
<circle cx="13.400" cy="9.700" r="10.100"/><circle cx="27.600" cy="9.200" r="7.700"/><circle cx="40" cy="15.900" r="10.400"/><circle cx="9" cy="21.600" r="8.900"/><circle cx="18.600" cy="26.500" r="8.900"/><circle cx="30.400" cy="23.300" r="7.800"/><rect x="10" y="8" width="30" height="18"/></g>
<text x="7.200" y="19" font-family="Liberation Sans, sans-serif" font-size="9.200" fill="#fff" textLength="38" lengthAdjust="spacingAndGlyphs">sales<tspan font-style="italic">f</tspan>orce</text></svg>
<svg style="left:666.900px;top:541px" width="51" height="33" viewBox="0 0 51 33"><defs><clipPath id="odc"><circle cx="11.300" cy="18.600" r="11.300"/><circle cx="26.500" cy="14.200" r="14.200"/><circle cx="40.700" cy="22" r="9.600"/><rect x="11.300" y="16" width="29.400" height="16.500"/><path d="M2 26 L11.300 32.500 L11.300 20 Z M50 26 L40.700 32.500 L40.700 20 Z"/><circle cx="10" cy="23.500" r="9"/><circle cx="41.400" cy="23.500" r="9"/></clipPath>
<linearGradient id="od1" x1="0" y1="0" x2="0" y2="1"><stop offset="0" stop-color="#3179d2"/><stop offset="1" stop-color="#2258a8"/></linearGradient>
<linearGradient id="od2" x1="0" y1="0" x2="0" y2="1"><stop offset="0" stop-color="#3a86de"/><stop offset="1" stop-color="#1d5cc8"/></linearGradient>
<linearGradient id="od3" x1="0" y1="0" x2="0" y2="1"><stop offset="0" stop-color="#3a88de"/><stop offset="1" stop-color="#2a6ccc"/></linearGradient>
<linearGradient id="od4" x1="0" y1="0" x2="0" y2="1"><stop offset="0" stop-color="#52a4ea"/><stop offset="1" stop-color="#3584dc"/></linearGradient></defs>
<g clip-path="url(#odc)"><rect width="51" height="16" fill="url(#od1)"/><rect y="15" width="51" height="18" fill="#2a66bc"/>
<circle cx="11.300" cy="18.600" r="11.300" fill="url(#od2)"/><path d="M12.900 6.900 L29.900 15.400 L11 32 L0 30 Z" fill="url(#od2)"/>
<path d="M38 11.600 C44 10.500 51 15 51 22 L51 30 L29.900 15.400 Z" fill="url(#od3)"/>
<path d="M29.900 15.400 L52 28.200 V34 H-2 V28.500 L3.600 26.200 Z" fill="url(#od4)"/></g></svg>
<div class="abs" style="left:667px;top:606px;width:50px;height:50px;background:#b5141b"></div>
<svg style="left:667px;top:606px" width="50" height="50" viewBox="0 0 50 50"><rect x="12.600" y="13.800" width="24.900" height="17.100" rx="1.200" fill="none" stroke="#fff" stroke-width="2.900"/><path d="M22.600 32.200 H27.700 L29.600 35.500 H34.200 V37.800 H16 V35.500 H20.700 Z" fill="#fff"/><text x="24.700" y="25.300" text-anchor="middle" font-family="Liberation Sans, sans-serif" font-weight="bold" font-size="8.600" fill="#fff" letter-spacing="-.45">SQL</text></svg>
<div class="abs" style="left:667px;top:679px;width:50px;height:50px;background:#0070e0"></div>
<svg style="left:667px;top:679px" width="50" height="50" viewBox="0 0 50 50"><path fill="#fff" d="M7.400 15.300 L17.600 8.600 L24.700 14.700 L14.500 20.800 Z M24.700 14.700 L32.100 8.600 L42.200 15.300 L35.100 20.800 Z M7.400 26.600 L14.500 21.100 L24.700 27.600 L17.600 33.300 Z M24.700 27.600 L35.100 21.100 L42.200 26.600 L32.100 33.300 Z M14.500 33.300 L17.600 35.300 L24.700 29.500 L32.100 35.300 L35.300 33.300 V35.300 L24.700 41.200 L14.500 35.300 Z"/></svg>
<div class="abs" style="left:667px;top:752px;width:50px;height:50px;background:#c4c4c4"></div>
<svg style="left:667px;top:752px" width="50" height="50" viewBox="0 0 50 50"><path d="M21.49 12.44 A12.8 12.8 0 0 1 33.03 14.99" stroke="#a039b0" stroke-width="3.2" fill="none"/><path d="M33.03 14.99 A12.8 12.8 0 0 1 36.83 29.18" stroke="#66c83c" stroke-width="3.2" fill="none"/><path d="M36.83 29.18 A12.8 12.8 0 0 1 24.80 37.60" stroke="#1f8fe0" stroke-width="3.2" fill="none"/><path d="M24.80 37.60 A12.8 12.8 0 0 1 15.75 33.85" stroke="#454545" stroke-width="3.2" fill="none"/><path d="M15.75 33.85 A12.8 12.8 0 0 1 12.00 24.80" stroke="#f7cb33" stroke-width="3.2" fill="none"/><path d="M12.00 24.80 A12.8 12.8 0 0 1 21.49 12.44" stroke="#1f8fe0" stroke-width="3.2" fill="none"/><path d="M16.85 11.03 A15.9 15.9 0 0 1 28.92 9.44" stroke="#66c83c" stroke-width="3.2" fill="none"/><path d="M28.92 9.44 A15.9 15.9 0 0 1 32.26 10.76" stroke="#1f8fe0" stroke-width="3.2" fill="none"/><path d="M32.26 10.76 A15.9 15.9 0 0 1 40.46 22.04" stroke="#f7cb33" stroke-width="3.2" fill="none"/><path d="M40.46 22.04 A15.9 15.9 0 0 1 40.16 28.92" stroke="#1f8fe0" stroke-width="3.2" fill="none"/><path d="M40.16 28.92 A15.9 15.9 0 0 1 35.02 36.98" stroke="#a039b0" stroke-width="3.2" fill="none"/><path d="M35.02 36.98 A15.9 15.9 0 0 1 20.68 40.16" stroke="#f7cb33" stroke-width="3.2" fill="none"/><path d="M20.68 40.16 A15.9 15.9 0 0 1 11.78 33.92" stroke="#a039b0" stroke-width="3.2" fill="none"/><path d="M11.78 33.92 A15.9 15.9 0 0 1 9.14 22.04" stroke="#66c83c" stroke-width="3.2" fill="none"/><path d="M9.14 22.04 A15.9 15.9 0 0 1 16.85 11.03" stroke="#454545" stroke-width="3.2" fill="none"/></svg>
<div class="abs" style="left:623px;top:622.800px;width:16.200px;height:16.200px;border-radius:8.100px;background:#056c56"></div><svg style="left:623px;top:622.800px" width="16.200" height="16.200" viewBox="0 0 16.200 16.200"><path d="M4.200 8.200 L7.100 10.500 L11.900 5.600" fill="none" stroke="#e8f3ef" stroke-width="1.050" stroke-linecap="round" stroke-linejoin="round"/></svg>
<!-- footer -->
<div class="abs" style="left:575px;top:821px;width:1141px;height:1px;background:#e6e6e6"></div>
<div class="abs" style="left:574px;top:822px;width:1142px;height:66px;background:#fff;border-left:1px solid #e3e3e3"></div>
<div class="abs" style="left:599px;top:842px;width:80px;height:32px;border:1px solid #d1d1d1;border-radius:4px;background:#fff"></div>
<span class="t" style="letter-spacing:-0.550px;margin-left:0.60px;--sx:0.9147;left:624.300px;top:858px;font-weight:bold;-webkit-text-stroke:0">Back</span>
<div class="abs" style="left:695px;top:842px;width:80px;height:32px;border-radius:4px;background:#f0f0f0"></div>
<span class="t" style="letter-spacing:-0.228px;margin-left:0.60px;left:720px;top:858px;font-weight:bold;-webkit-text-stroke:0;color:#bdbdbd">Next</span>
<div class="abs" style="left:1615px;top:842px;width:80px;height:32px;border:1px solid #d1d1d1;border-radius:4px;background:#fff"></div>
<span class="t" style="letter-spacing:-0.550px;margin-left:0.60px;--sx:0.9747;left:1634.200px;top:858px;font-weight:bold;-webkit-text-stroke:0">Cancel</span>
<div class="abs" style="left:432px;top:897px;width:998px;height:10px;border-radius:10px;box-shadow:0 0 28px 10px rgba(0,0,0,.17)"></div>


<!-- context menu -->
<div class="abs" style="left:892px;top:646.800px;width:191px;height:116px;background:#fff;border-radius:6px;box-shadow:0 4px 10px rgba(0,0,0,.16),0 0 2px rgba(0,0,0,.14)"></div>
<div class="abs" style="left:896px;top:723px;width:183.500px;height:36px;background:#f0f0f0;border-radius:4px 0 0 4px"></div>
<svg style="left:905.200px;top:661px" width="14" height="18" viewBox="0 0 14 18"><rect class="mi" x="1.500" y="8.900" width="11" height="7.400" rx=".3" style="stroke-width:1.100;stroke:#1a1a1a"/><path class="mi" d="M3.600 8.900 V5.200 a3.400 3.400 0 0 1 6.800 0 V8.900" style="stroke-width:1.100;stroke:#1a1a1a"/></svg>
<span class="t" style="letter-spacing:-0.146px;margin-left:-0.40px;left:928.500px;top:669px">Move to Business</span>
<svg style="left:904px;top:696.500px" width="17" height="17" viewBox="0 0 17 17"><circle class="mi" cx="8.500" cy="8.500" r="7.600"/><path class="mi" d="M3.200 3.200 L13.800 13.800"/></svg>
<span class="t" style="letter-spacing:-0.359px;margin-left:-0.40px;left:928.500px;top:705px">Block</span>
<svg class="gear" style="left:904px;top:732.800px" width="16.400" height="16.400" viewBox="0 0 20 20"><g class="mi" style="stroke-width:1.250"><circle cx="10" cy="10" r="3.300"/><path d="M11.05 2.98 L12.28 1.19 L14.62 2.16 L14.22 4.29 L15.71 5.78 L17.84 5.38 L18.81 7.72 L17.02 8.95 L17.02 11.05 L18.81 12.28 L17.84 14.62 L15.71 14.22 L14.22 15.71 L14.62 17.84 L12.28 18.81 L11.05 17.02 L8.95 17.02 L7.72 18.81 L5.38 17.84 L5.78 15.71 L4.29 14.22 L2.16 14.62 L1.19 12.28 L2.98 11.05 L2.98 8.95 L1.19 7.72 L2.16 5.38 L4.29 5.78 L5.78 4.29 L5.38 2.16 L7.72 1.19 L8.95 2.98 Z"/></g></svg>
<span class="t" style="letter-spacing:0.005px;margin-left:0.60px;left:928.500px;top:741px">Configure connector</span>
<svg style="left:1061.500px;top:735.500px" width="7" height="12" viewBox="0 0 7 12"><path class="mi" d="M1 1 L6 6 L1 11" style="stroke:#424242"/></svg>
<!-- submenu -->
<div class="abs" style="left:1079.500px;top:722.800px;width:217.500px;height:79.700px;background:#fff;border-radius:6px;box-shadow:0 4px 10px rgba(0,0,0,.16),0 0 2px rgba(0,0,0,.14)"></div>
<span class="t" style="letter-spacing:-0.014px;margin-left:0.60px;left:1090.700px;top:745px">Connector endpoints (preview)</span>
<span class="t" style="letter-spacing:-0.071px;margin-left:0.60px;left:1090.700px;top:781px">Connector actions</span>
<div class="red" style="left:1049px;top:609.500px;width:39.500px;height:42px;border-width:5.600px"></div>
<div class="red" style="left:1080.200px;top:762.600px;width:136px;height:40.700px;border-width:5.500px"></div>

</div></body></html>
